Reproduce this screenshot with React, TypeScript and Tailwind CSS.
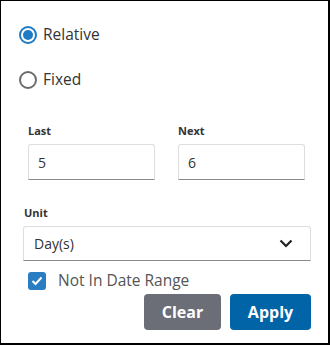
import React, { useState } from 'react'

function Radio({ checked, label, onClick }: { checked: boolean; label: string; onClick: () => void }) {
  return (
    <button onClick={onClick} className="flex items-center h-[18px] gap-[6px] text-left">
      <span
        className={
          checked
            ? 'w-[18px] h-[18px] rounded-full border-2 border-[#1f7bc4] flex items-center justify-center'
            : 'w-[18px] h-[18px] rounded-full border-2 border-[#6c6c6c] flex items-center justify-center'
        }
      >
        {checked && <span className="w-[10px] h-[10px] rounded-full bg-[#1f7bc4]" />}
      </span>
      <span className="text-[15.5px] text-[#333]">{label}</span>
    </button>
  )
}

function Field({ label, value }: { label: string; value: string }) {
  return (
    <div className="flex flex-col w-[127px]">
      <label className="text-[11px] font-bold text-[#333] leading-[14px] h-[14px]">{label}</label>
      <input
        className="mt-[6px] h-[36px] w-full px-[9px] text-[14px] text-[#333] bg-white border border-[#dedede] border-b-[#8a8a8a] rounded-t-[3px] focus:outline-none"
        defaultValue={value}
      />
    </div>
  )
}

export default function App() {
  const [mode, setMode] = useState('relative')
  const [notInRange, setNotInRange] = useState(true)

  return (
    <div
      className="w-[330px] h-[345px] bg-white border border-black border-r-2 border-b-2"
      style={{ fontFamily: '"Open Sans", "Liberation Sans", sans-serif' }}
    >
      <div className="pl-[18px] pt-[25px] flex flex-col gap-[27px]">
        <Radio checked={mode === 'relative'} label="Relative" onClick={() => setMode('relative')} />
        <Radio checked={mode === 'fixed'} label="Fixed" onClick={() => setMode('fixed')} />
      </div>

      <div className="pl-[27px] pt-[35px] flex gap-[23px]">
        <Field label="Last" value="5" />
        <Field label="Next" value="6" />
      </div>

      <div className="pl-[22px] pt-[26px] w-[310px]">
        <div className="text-[11px] font-bold text-[#333] leading-[14px] h-[14px] pl-[1px]">Unit</div>
        <div className="mt-[6px] h-[35px] flex items-center justify-between px-[10px] bg-white border border-[#dedede] border-b-[#8a8a8a] rounded-t-[3px]">
          <span className="text-[14px] text-[#333]">Day(s)</span>
          <svg width="14" height="9" viewBox="0 0 14 9" className="mr-[7px]">
            <path d="M1.5 1.5 L7 7 L12.5 1.5" fill="none" stroke="#222" strokeWidth="2.2" />
          </svg>
        </div>
      </div>

      <div className="pl-[27px] pt-[11px]">
        <button onClick={() => setNotInRange(!notInRange)} className="flex items-center gap-[12px] h-[18px]">
          <span
            className={
              notInRange
                ? 'w-[18px] h-[18px] rounded-[3px] bg-[#2a7dc1] flex items-center justify-center'
                : 'w-[18px] h-[18px] rounded-[3px] border-2 border-[#6c6c6c]'
            }
          >
            {notInRange && (
              <svg width="12" height="10" viewBox="0 0 12 10">
                <path d="M1.5 5 L4.5 8 L10.5 1.5" fill="none" stroke="white" strokeWidth="2" />
              </svg>
            )}
          </span>
          <span className="text-[15.5px] text-[#555]">Not In Date Range</span>
        </button>
      </div>

      <div className="flex justify-end gap-[9px] w-[310px] pt-[4px]">
        <button className="w-[77px] h-[36px] rounded-[4px] bg-[#6b6e76] text-white font-bold text-[16px]">Clear</button>
        <button className="w-[81px] h-[36px] rounded-[4px] bg-[#0064a6] text-white font-bold text-[16px]">Apply</button>
      </div>
    </div>
  )
}
